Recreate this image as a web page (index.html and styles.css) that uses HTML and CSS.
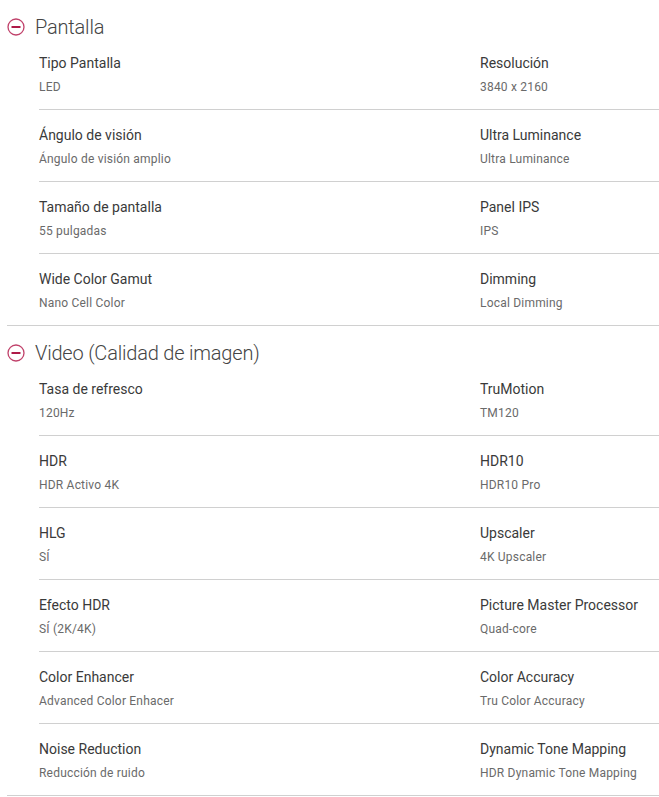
FILE: index.html
```html
<!DOCTYPE html>
<html lang="es">
<head>
<meta charset="utf-8">
<title>Especificaciones</title>
<link rel="stylesheet" href="styles.css">
</head>
<body>
<section class="spec-section">
  <h2 class="spec-title">
    <svg class="toggle" width="18" height="18" viewBox="0 0 18 18" aria-hidden="true"><circle cx="9" cy="9" r="8" fill="none" stroke="#c0416a" stroke-width="1.3"/><line x1="4.5" y1="9" x2="13.5" y2="9" stroke="#a50034" stroke-width="1.8"/></svg>
    <span>Pantalla</span>
  </h2>
  <div class="spec-row">
    <div class="spec-item"><div class="label">Tipo Pantalla</div><div class="value">LED</div></div>
    <div class="spec-item"><div class="label">Resolución</div><div class="value">3840 x 2160</div></div>
  </div>
  <div class="spec-row">
    <div class="spec-item"><div class="label">Ángulo de visión</div><div class="value">Ángulo de visión amplio</div></div>
    <div class="spec-item"><div class="label">Ultra Luminance</div><div class="value">Ultra Luminance</div></div>
  </div>
  <div class="spec-row">
    <div class="spec-item"><div class="label">Tamaño de pantalla</div><div class="value">55 pulgadas</div></div>
    <div class="spec-item"><div class="label">Panel IPS</div><div class="value">IPS</div></div>
  </div>
  <div class="spec-row">
    <div class="spec-item"><div class="label">Wide Color Gamut</div><div class="value">Nano Cell Color</div></div>
    <div class="spec-item"><div class="label">Dimming</div><div class="value">Local Dimming</div></div>
  </div>
</section>
<section class="spec-section">
  <h2 class="spec-title">
    <svg class="toggle" width="18" height="18" viewBox="0 0 18 18" aria-hidden="true"><circle cx="9" cy="9" r="8" fill="none" stroke="#c0416a" stroke-width="1.3"/><line x1="4.5" y1="9" x2="13.5" y2="9" stroke="#a50034" stroke-width="1.8"/></svg>
    <span>Video (Calidad de imagen)</span>
  </h2>
  <div class="spec-row">
    <div class="spec-item"><div class="label">Tasa de refresco</div><div class="value">120Hz</div></div>
    <div class="spec-item"><div class="label">TruMotion</div><div class="value">TM120</div></div>
  </div>
  <div class="spec-row">
    <div class="spec-item"><div class="label">HDR</div><div class="value">HDR Activo 4K</div></div>
    <div class="spec-item"><div class="label">HDR10</div><div class="value">HDR10 Pro</div></div>
  </div>
  <div class="spec-row">
    <div class="spec-item"><div class="label">HLG</div><div class="value">SÍ</div></div>
    <div class="spec-item"><div class="label">Upscaler</div><div class="value">4K Upscaler</div></div>
  </div>
  <div class="spec-row">
    <div class="spec-item"><div class="label">Efecto HDR</div><div class="value">SÍ (2K/4K)</div></div>
    <div class="spec-item"><div class="label">Picture Master Processor</div><div class="value">Quad-core</div></div>
  </div>
  <div class="spec-row">
    <div class="spec-item"><div class="label">Color Enhancer</div><div class="value">Advanced Color Enhacer</div></div>
    <div class="spec-item"><div class="label">Color Accuracy</div><div class="value">Tru Color Accuracy</div></div>
  </div>
  <div class="spec-row">
    <div class="spec-item"><div class="label">Noise Reduction</div><div class="value">Reducción de ruido</div></div>
    <div class="spec-item"><div class="label">Dynamic Tone Mapping</div><div class="value">HDR Dynamic Tone Mapping</div></div>
  </div>
</section>
</body>
</html>
```

FILE: styles.css
```css
* { box-sizing: border-box; }
html, body { margin: 0; padding: 0; background: #fff; }
body {
  font-family: Roboto, "Open Sans", Arial, sans-serif;
  color: #333;
}
.spec-section {
  margin-left: 7px;
  border-bottom: 1px solid #d0d0d0;
}
.spec-title {
  display: flex;
  align-items: center;
  gap: 10px;
  margin: 0;
  padding-top: 16px;
  height: 38px;
  line-height: 22px;
  font-size: 20px;
  font-weight: 300;
  letter-spacing: -0.2px;
  color: #444;
}
.toggle { display: block; flex: none; }
.spec-row {
  margin-left: 32px;
  display: grid;
  grid-template-columns: 441px 1fr;
  padding: 15px 0 14px;
  border-bottom: 1px solid #d0d0d0;
}
.spec-row:last-child { border-bottom: none; }
.label {
  font-size: 14px;
  line-height: 20px;
  color: #3a3a3a;
}
.value {
  margin-top: 6px;
  font-size: 12px;
  line-height: 16px;
  color: #6a6a6a;
  letter-spacing: 0.2px;
}
```
